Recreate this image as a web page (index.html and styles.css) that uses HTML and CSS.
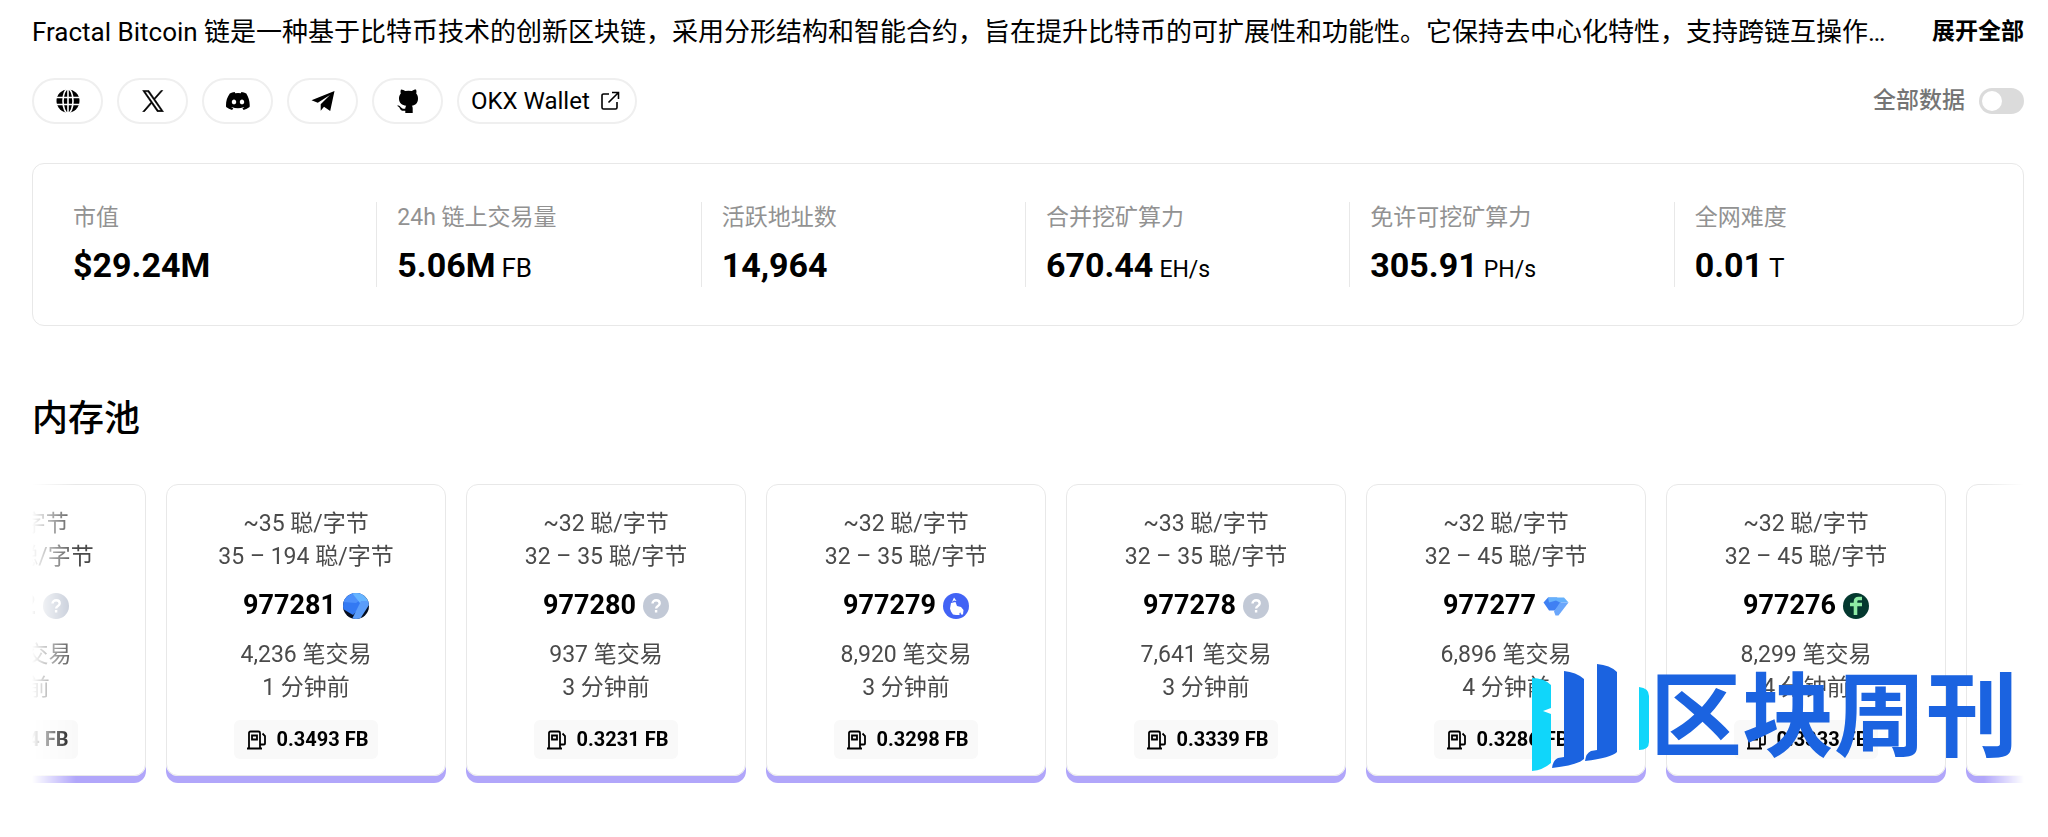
FILE: index.html
```
<!doctype html>
<html lang="zh-CN">
<head>
    <meta charset="utf-8">
    <meta name="viewport" content="width=device-width, initial-scale=1">
    <title>Fractal Bitcoin 浏览器</title>
    <link rel="stylesheet" href="styles.css">
</head>
<body>
    <!--公用图标-->
    <svg class="sprite" aria-hidden="true">
        <symbol id="gas" viewBox="0 0 20 20">
            <path d="M2 18.500V3a1.500 1.500 0 0 1 1.500-1.500h8A1.500 1.500 0 0 1 13 3v15.500M0 18.500h15M5 5.500h5v4H5zM15.500 3.500l2.500 2.500v7.500a1 1 0 0 1-1 1h-3.500" fill="none" stroke="#000" stroke-width="1.800"/>
        </symbol>
        <symbol id="unknown" viewBox="0 0 26 26">
            <circle cx="13" cy="13" r="13" fill="#c2c9d6"/>
            <path d="M9.500 10.500c0-4.300 7.200-4.300 7.200 0 0 2.600-3.600 2.400-3.600 5M13.100 17v2.600" fill="none" stroke="#fff" stroke-width="2.400"/>
        </symbol>
    </svg>

    <div class="page">
        <!--简介-->
        <div class="intro">
            <p class="intro-text">Fractal Bitcoin 链是一种基于比特币技术的创新区块链，采用分形结构和智能合约，旨在提升比特币的可扩展性和功能性。它保持去中心化特性，支持跨链互操作…</p>
            <button class="intro-more" type="button">展开全部</button>
        </div>

        <div class="toolbar">
            <nav class="links">
                <a class="pill" href="#" aria-label="官网">
                    <svg width="24" height="24" viewBox="0 0 24 24"><circle cx="12" cy="12" r="11.500"/><path d="M12 0v24M0 8.500h24M0 15.500h24" stroke="#fff" stroke-width="1.600"/><ellipse cx="12" cy="12" rx="5" ry="12" fill="none" stroke="#fff" stroke-width="1.600"/></svg>
                </a>
                <a class="pill" href="#" aria-label="X">
                    <svg width="22" height="22" viewBox="0 0 24 24"><path stroke="#000" stroke-width=".6" d="M14.200 10.200 22.700.5h-2L13.300 8.900 7.500.5H.7l8.900 12.900L.7 23.700h2l7.800-9 6.200 9h6.800zm-2.700 3.200-.9-1.300L3.400 2h3.100l5.800 8.200.9 1.300 7.500 10.700h-3.100z"/></svg>
                </a>
                <a class="pill" href="#" aria-label="Discord">
                    <svg width="24" height="24" viewBox="0 0 24 24"><path d="M20.300 4.400A19.800 19.800 0 0 0 15.400 2.900c-.2.400-.5.900-.6 1.300a18.300 18.300 0 0 0-5.500 0c-.2-.4-.4-.9-.6-1.300-1.700.3-3.400.8-4.900 1.500C.5 9.100-.3 13.600.1 18.100a19.900 19.900 0 0 0 6 3c.5-.7.9-1.300 1.200-2-.7-.2-1.300-.5-1.900-.9l.4-.3c3.900 1.800 8.200 1.800 12.100 0l.4.300c-.6.400-1.200.7-1.900.9.400.7.800 1.300 1.200 2a19.800 19.800 0 0 0 6-3c.5-5.200-.8-9.700-3.300-13.700zM8 15.300c-1.200 0-2.200-1.100-2.200-2.400s1-2.400 2.200-2.400 2.200 1.100 2.200 2.400-1 2.400-2.200 2.400zm8 0c-1.200 0-2.200-1.100-2.200-2.400s1-2.400 2.200-2.400 2.200 1.100 2.200 2.400-1 2.400-2.200 2.400z"/></svg>
                </a>
                <a class="pill" href="#" aria-label="Telegram">
                    <svg width="24" height="24" viewBox="0 0 24 24"><path d="M23.500 2 .5 11.300l6.300 2.500L19 6l-9.300 9.200v6.600l3.300-4 6.200 4.200z"/></svg>
                </a>
                <a class="pill" href="#" aria-label="GitHub">
                    <svg width="24" height="24" viewBox="0 0 24 24"><path d="M5 .5c1.700 0 3.200.8 4.200 1.600a16 16 0 0 1 6.600 0C17 1.200 18.300.5 20 .5c.6 1.400.6 2.900.2 4 1.200 1.400 1.800 3 1.800 5 0 4.700-2.600 6.700-6.200 7.300.7.700.9 1.600.9 2.700V24H9.300v-2.300c-3.400.6-4.600-.5-5.400-2.200-.6-1.200-1.300-1.900-2.500-2.400-.5-.5.300-.9 1.200-.6 1.600.4 2.400 2.400 3.800 3 .9.400 2 .3 2.900 0 0-1.100.3-2 .9-2.700C6.100 16.200 3 14.200 3 9.500c0-2 .7-3.600 1.800-5C4.400 3.400 4.400 1.900 5 .5z"/></svg>
                </a>
                <a class="pill pill-text" href="#">OKX Wallet
                    <svg width="20" height="20" viewBox="0 0 20 20" fill="none" stroke="#000" stroke-width="1.600"><path d="M9 3H3.500A1.500 1.500 0 0 0 2 4.500v12A1.500 1.500 0 0 0 3.500 18h12a1.500 1.500 0 0 0 1.500-1.500V11M12 1.500h6.500V8M18.500 1.500 8.500 11.500"/></svg>
                </a>
            </nav>
            <label class="switch">全部数据
                <input class="switch-input" type="checkbox">
            </label>
        </div>

        <!--链上数据-->
        <dl class="stats">
            <div class="stat"><dt>市值</dt><dd>$29.24M</dd></div>
            <div class="stat"><dt>24h 链上交易量</dt><dd>5.06M <span class="unit">FB</span></dd></div>
            <div class="stat"><dt>活跃地址数</dt><dd>14,964</dd></div>
            <div class="stat"><dt>合并挖矿算力</dt><dd>670.44 <span class="unit unit-small">EH/s</span></dd></div>
            <div class="stat"><dt>免许可挖矿算力</dt><dd>305.91 <span class="unit unit-small">PH/s</span></dd></div>
            <div class="stat"><dt>全网难度</dt><dd>0.01 <span class="unit">T</span></dd></div>
        </dl>

        <!--内存池-->
        <h2 class="title">内存池</h2>
        <div class="pool">
            <div class="track">
                <article class="block">
                    <p>~35 聪/字节<br>35 – 194 聪/字节</p>
                    <h3>977282 <svg class="miner"><use href="#unknown"/></svg></h3>
                    <p>4,236 笔交易<br>1 分钟前</p>
                    <div class="fee"><svg class="gas"><use href="#gas"/></svg>0.3494 FB</div>
                </article>
                <article class="block">
                    <p>~35 聪/字节<br>35 – 194 聪/字节</p>
                    <h3>977281
                        <svg class="miner" viewBox="0 0 26 26">
                            <clipPath id="round"><circle cx="13" cy="13" r="13"/></clipPath>
                            <g clip-path="url(#round)"><path fill="#050d1f" d="M0 0h26v26H0z"/><path fill="#3379f3" d="M0 0h22l-2 12-10 10L0 16z"/><path fill="#4c90fb" d="M0 0h20v5l-7 5L0 9z"/><path fill="#67b5ff" d="M9 0h17v10h-9l-4-5z"/><path fill="#5b9dfa" d="M18 8h8v4l-9 14H9z"/></g>
                        </svg>
                    </h3>
                    <p>4,236 笔交易<br>1 分钟前</p>
                    <div class="fee"><svg class="gas"><use href="#gas"/></svg>0.3493 FB</div>
                </article>
                <article class="block">
                    <p>~32 聪/字节<br>32 – 35 聪/字节</p>
                    <h3>977280 <svg class="miner"><use href="#unknown"/></svg></h3>
                    <p>937 笔交易<br>3 分钟前</p>
                    <div class="fee"><svg class="gas"><use href="#gas"/></svg>0.3231 FB</div>
                </article>
                <article class="block">
                    <p>~32 聪/字节<br>32 – 35 聪/字节</p>
                    <h3>977279
                        <svg class="miner" viewBox="0 0 26 26"><circle cx="13" cy="13" r="13" fill="#4263f5"/><path fill="#fff" d="M11 4.500 13.500 8l-2.500-.5L9 9zM8 10l4.500-1 1.500 4 4 1 2.500 3-.5 4.500h-2l-.5-2-1 .5v2H13l-3-.5-2-3-1-3z"/></svg>
                    </h3>
                    <p>8,920 笔交易<br>3 分钟前</p>
                    <div class="fee"><svg class="gas"><use href="#gas"/></svg>0.3298 FB</div>
                </article>
                <article class="block">
                    <p>~33 聪/字节<br>32 – 35 聪/字节</p>
                    <h3>977278 <svg class="miner"><use href="#unknown"/></svg></h3>
                    <p>7,641 笔交易<br>3 分钟前</p>
                    <div class="fee"><svg class="gas"><use href="#gas"/></svg>0.3339 FB</div>
                </article>
                <article class="block">
                    <p>~32 聪/字节<br>32 – 45 聪/字节</p>
                    <h3>977277
                        <svg class="miner" viewBox="0 0 26 26"><path fill="#3f80f3" d="M.5 9.500 5 4.500h9l4 5.500-6 7.500H6z"/><path fill="#66b1fc" d="M5 4.500h16l4.500 5H17l-4-2-7 2z"/><path fill="#6aa6fb" d="M17 9.500h8.500l-10 13h-3l-1.500-4z"/></svg>
                    </h3>
                    <p>6,896 笔交易<br>4 分钟前</p>
                    <div class="fee"><svg class="gas"><use href="#gas"/></svg>0.3286 FB</div>
                </article>
                <article class="block">
                    <p>~32 聪/字节<br>32 – 45 聪/字节</p>
                    <h3>977276
                        <svg class="miner" viewBox="0 0 26 26"><circle cx="13" cy="13" r="13" fill="#04382f"/><path d="M19 5.500h-3.500q-3 0-3 3V22M7 11.500h12" fill="none" stroke="#8deaa4" stroke-width="3.600"/></svg>
                    </h3>
                    <p>8,299 笔交易<br>4 分钟前</p>
                    <div class="fee"><svg class="gas"><use href="#gas"/></svg>0.3333 FB</div>
                </article>
                <article class="block"></article>
            </div>
        </div>
    </div>

    <!--水印-->
    <div class="watermark">
        <svg width="118" height="108" viewBox="0 0 118 108">
            <path fill="#10d6fa" d="M0 14q12 0 19 7v23l-8 3 8 3v49q-8 7-19 8zM107 23q10 1 10 9v46q0 8-10 8z"/>
            <path fill="#1b63e0" d="M32 7q12 1 20 8v80q-6 6-32 9 1-8 6-10l6-1zM65 0q13 1 20 8v80q-6 6-32 9 1-8 6-10l6-1z"/>
        </svg>
        <span>区块周刊</span>
    </div>
</body>
</html>
```
FILE: styles.css
```
*{
    margin:0;
    padding:0;
    box-sizing:border-box;
}
body{
    position:relative;
    overflow-x:hidden;
    background:#fff;
    color:#000;
    font-family:Roboto,"Noto Sans CJK SC",sans-serif;
    font-size:23px;
}
a{
    color:inherit;
    text-decoration:none;
}
.sprite{
    display:none;
}
.page{
    padding:14px 24px 48px 32px;
}

/* 简介 */
.intro{
    display:flex;
    align-items:center;
    justify-content:space-between;
    gap:32px;
}
.intro-text{
    font-size:26px;
    line-height:36px;
    white-space:nowrap;
    overflow:hidden;
}
.intro-more{
    flex:none;
    border:0;
    background:none;
    font:inherit;
    font-weight:600;
    line-height:32px;
    cursor:pointer;
}
.toolbar{
    display:flex;
    align-items:center;
    justify-content:space-between;
    margin:28px 0 39px;
}
.links{
    display:flex;
    gap:14px;
}
.pill{
    display:flex;
    align-items:center;
    justify-content:center;
    gap:10px;
    width:71px;
    height:46px;
    border:2px solid #efefef;
    border-radius:23px;
}
.pill-text{
    width:auto;
    padding:0 15px 0 12px;
    font-size:24px;
}
.switch{
    display:flex;
    align-items:center;
    gap:14px;
    color:#757575;
    font-weight:500;
    line-height:32px;
}
.switch-input{
    appearance:none;
    width:45px;
    height:26px;
    padding:3px;
    border-radius:13px;
    background:#dbdbdb;
}
.switch-input::before{
    content:"";
    display:block;
    width:20px;
    height:20px;
    border-radius:50%;
    background:#fff;
}
.switch-input:checked{
    background:#000;
}
.switch-input:checked::before{
    margin-left:auto;
}

/* 链上数据 */
.stats{
    display:flex;
    padding:38px 25px 38px 19px;
    border:1px solid #e8e8e8;
    border-radius:12px;
}
.stat{
    flex:1;
    padding-left:20px;
    border-left:1px solid #e8e8e8;
}
.stat:first-child{
    border-color:transparent;
}
.stat dt{
    color:#929292;
    line-height:32px;
}
.stat dd{
    display:flex;
    align-items:baseline;
    gap:6px;
    margin-top:9px;
    font-size:34px;
    font-weight:700;
    line-height:44px;
}
.unit{
    font-size:26px;
    font-weight:400;
    line-height:32px;
}
.unit-small{
    font-size:23px;
}

/* 内存池 */
.title{
    margin:69px 0 41px;
    font-size:36px;
    font-weight:500;
    line-height:48px;
}
.pool{
    overflow:hidden;
    padding-bottom:8px;
    -webkit-mask-image:linear-gradient(90deg,transparent,#000 44px,#000 calc(100% - 40px),transparent);
    mask-image:linear-gradient(90deg,transparent,#000 44px,#000 calc(100% - 40px),transparent);
}
.track{
    display:flex;
    gap:20px;
    margin-left:-166px;
}
.block{
    display:flex;
    flex:none;
    flex-direction:column;
    align-items:center;
    gap:16px;
    width:280px;
    padding:22px 0 16px;
    border:1px solid #e8e8e8;
    border-radius:12px;
    box-shadow:0 7px 0 #b1a6fa;
    color:#4a4a4a;
    line-height:33px;
    text-align:center;
}
.block h3{
    display:flex;
    align-items:center;
    gap:7px;
    color:#000;
    font-size:27px;
    font-weight:700;
}
.miner{
    width:26px;
    height:26px;
}
.fee{
    display:flex;
    align-items:center;
    gap:10px;
    height:39px;
    padding:0 10px 0 13px;
    border-radius:6px;
    background:#f9f9f9;
    color:#000;
    font-size:20px;
    font-weight:700;
}
.gas{
    width:20px;
    height:20px;
}

/* 水印 */
.watermark{
    position:absolute;
    top:664px;
    right:30px;
    display:flex;
    align-items:center;
    height:108px;
    color:#1b63e0;
    font-size:92px;
    font-weight:700;
    line-height:108px;
    pointer-events:none;
}
```
